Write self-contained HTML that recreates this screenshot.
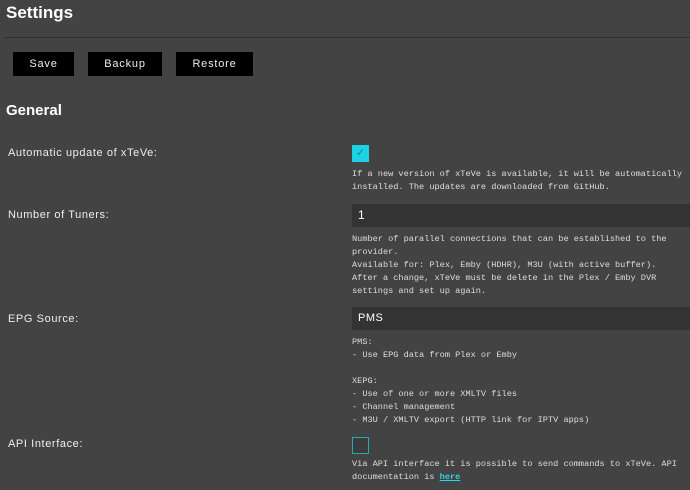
<!DOCTYPE html>
<html><head><style>
body{margin:0;width:690px;height:490px;background:#434343;overflow:hidden;font-family:"Liberation Sans",sans-serif;color:#fff;position:relative}
.a{position:absolute}
h1{position:absolute;margin:0;left:6px;top:3px;font-size:17px;font-weight:bold}
.hr{position:absolute;left:4px;right:0;top:37px;height:1px;background:#2e2e2e}
.btn{position:absolute;top:52px;height:24px;background:#000;color:#eee;font-size:11px;letter-spacing:.8px;text-align:center;line-height:24px}
h2{position:absolute;margin:0;left:6px;top:102px;font-size:15px;font-weight:bold}
.lbl{position:absolute;left:8px;font-size:11px;letter-spacing:.6px;color:#eee}
.d{position:absolute;left:352px;font-family:"Liberation Mono",monospace;font-size:8.6px;line-height:13px;color:#ddd;white-space:pre}
.inp{position:absolute;left:352px;right:0;height:23px;background:#333;color:#fff;font-size:12px;line-height:23px;padding-left:6px;box-sizing:border-box}
.cb{position:absolute;left:352px;width:17px;height:17px;box-sizing:border-box}
</style></head><body>
<h1>Settings</h1>
<div class="hr"></div>
<div class="btn" style="left:13px;width:61px">Save</div>
<div class="btn" style="left:88px;width:74px">Backup</div>
<div class="btn" style="left:176px;width:77px">Restore</div>
<h2>General</h2>
<div class="lbl" style="top:147px">Automatic update of xTeVe:</div>
<div class="cb" style="top:145px;background:#1ed2e6;color:#1a7f99;font-size:11px;text-align:center;line-height:17px">✓</div>
<div class="d" style="top:168px">If a new version of xTeVe is available, it will be automatically
installed. The updates are downloaded from GitHub.</div>
<div class="lbl" style="top:209px">Number of Tuners:</div>
<div class="inp" style="top:204px">1</div>
<div class="d" style="top:233px">Number of parallel connections that can be established to the
provider.
Available for: Plex, Emby (HDHR), M3U (with active buffer).
After a change, xTeVe must be delete in the Plex / Emby DVR
settings and set up again.</div>
<div class="lbl" style="top:313px">EPG Source:</div>
<div class="inp" style="top:307px;font-size:11px;letter-spacing:.5px">PMS</div>
<div class="d" style="top:336px">PMS:
- Use EPG data from Plex or Emby

XEPG:
- Use of one or more XMLTV files
- Channel management
- M3U / XMLTV export (HTTP link for IPTV apps)</div>
<div class="lbl" style="top:438px">API Interface:</div>
<div class="cb" style="top:437px;border:1.5px solid #2aa7b4;background:#3c3c3c"></div>
<div class="d" style="top:458px">Via API interface it is possible to send commands to xTeVe. API
documentation is <span style="color:#2ed3e6;text-decoration:underline;font-weight:bold">here</span></div>
</body></html>
